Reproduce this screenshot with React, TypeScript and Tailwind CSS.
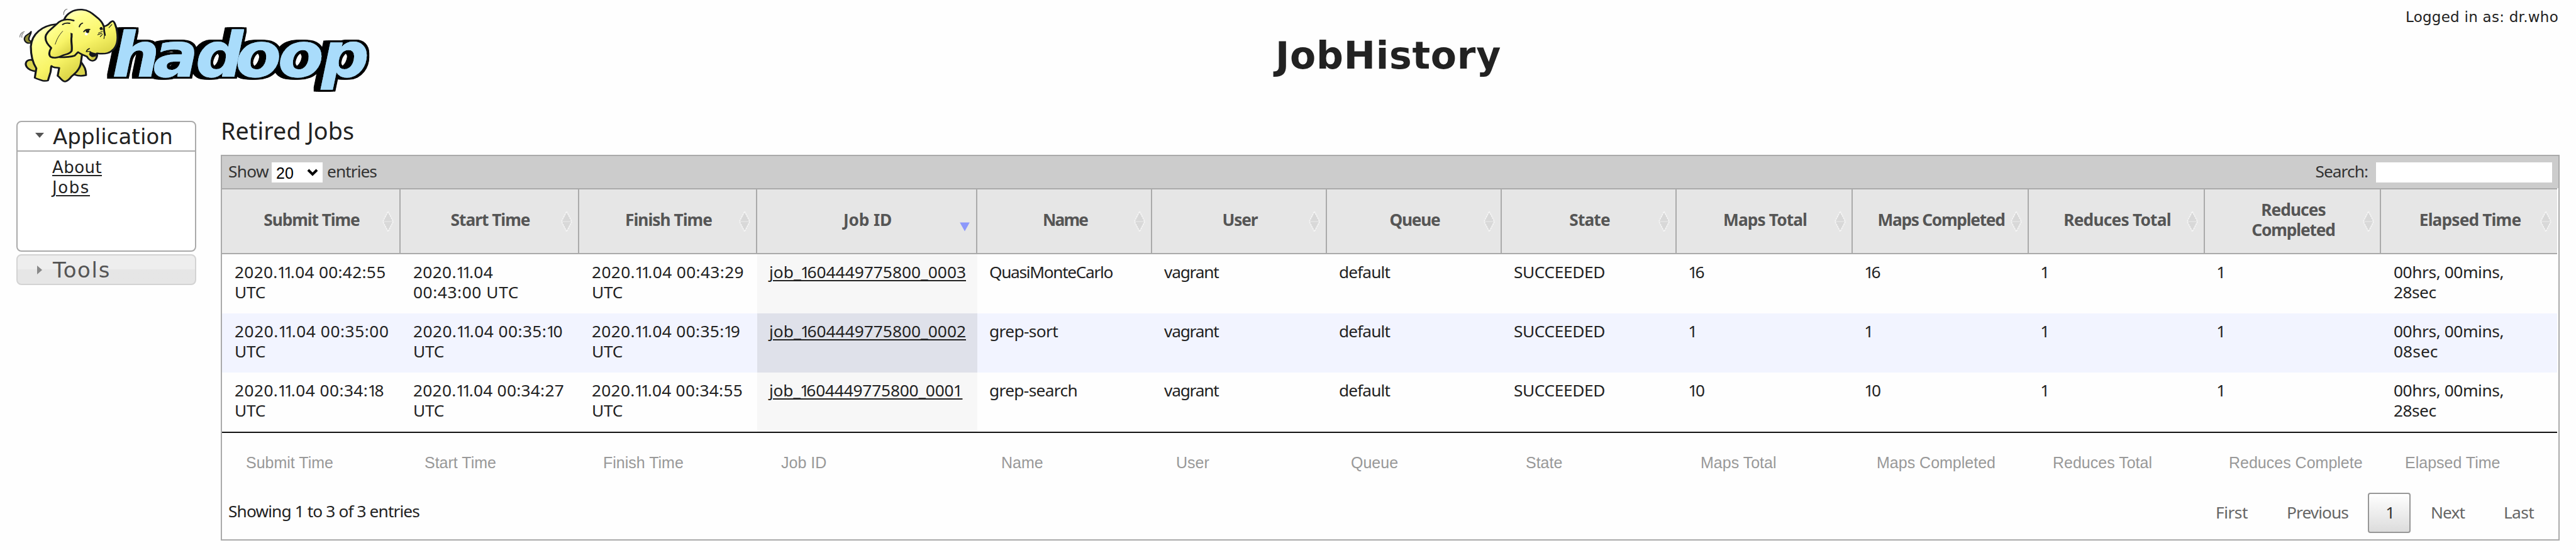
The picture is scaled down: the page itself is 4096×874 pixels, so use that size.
import { useLayoutEffect, useRef } from "react";

/** Text run whose tracking is adjusted so that it spans `w` pixels. */
function T({ children, w, className = "" }: { children: string; w?: number; className?: string }) {
  const ref = useRef<HTMLSpanElement>(null);
  useLayoutEffect(() => {
    const el = ref.current;
    if (!el || !w) return;
    el.style.letterSpacing = "0px";
    const natural = el.getBoundingClientRect().width;
    el.style.letterSpacing = `${(w - natural) / children.length}px`;
  }, [w, children]);
  return (
    <span ref={ref} className={`inline-block whitespace-pre ${className}`}>
      {children.split(/(1(?! ))/).map((part, i) =>
        part === "1" ? (
          <span key={i} className="-ml-[0.03em] -mr-[0.17em]">
            1
          </span>
        ) : (
          part
        ),
      )}
    </span>
  );
}

type Run = [string, number?];

const COLS =
  "grid grid-cols-[284px_284px_283px_350px_278px_278px_278px_278px_280px_280px_280px_280px_280px] w-[3713px]";

const HEADS: Run[][] = [
  [["Submit Time", 152.5]],
  [["Start Time", 126]],
  [["Finish Time", 138]],
  [["Job ID", 77]],
  [["Name", 71]],
  [["User", 56]],
  [["Queue", 80]],
  [["State", 64.5]],
  [["Maps Total", 133]],
  [["Maps Completed", 202]],
  [["Reduces Total", 170.5]],
  [["Reduces", 102.5], ["Completed", 132.5]],
  [["Elapsed Time", 161.5]],
];

const UTC: Run = ["UTC", 49];

const ROWS: Run[][][] = [
  [
    [["2020.11.04 00:42:55", 240.5], UTC],
    [["2020.11.04", 127], ["00:43:00 UTC", 168]],
    [["2020.11.04 00:43:29", 242], UTC],
    [["job_1604449775800_0003", 313]],
    [["QuasiMonteCarlo", 196]],
    [["vagrant", 86.5]],
    [["default", 81]],
    [["SUCCEEDED", 145]],
    [["16", 26]],
    [["16", 26]],
    [["1"]],
    [["1"]],
    [["00hrs, 00mins,", 175], ["28sec", 67.5]],
  ],
  [
    [["2020.11.04 00:35:00", 245.5], UTC],
    [["2020.11.04 00:35:10", 238], UTC],
    [["2020.11.04 00:35:19", 236], UTC],
    [["job_1604449775800_0002", 313]],
    [["grep-sort", 109]],
    [["vagrant", 86.5]],
    [["default", 81]],
    [["SUCCEEDED", 145]],
    [["1"]],
    [["1"]],
    [["1"]],
    [["1"]],
    [["00hrs, 00mins,", 175], ["08sec", 70.5]],
  ],
  [
    [["2020.11.04 00:34:18", 238], UTC],
    [["2020.11.04 00:34:27", 240], UTC],
    [["2020.11.04 00:34:55", 240], UTC],
    [["job_1604449775800_0001", 303]],
    [["grep-search", 140]],
    [["vagrant", 86.5]],
    [["default", 81]],
    [["SUCCEEDED", 145]],
    [["10", 27]],
    [["10", 27]],
    [["1"]],
    [["1"]],
    [["00hrs, 00mins,", 175], ["28sec", 67.5]],
  ],
];

const FOOT = [
  "Submit Time",
  "Start Time",
  "Finish Time",
  "Job ID",
  "Name",
  "User",
  "Queue",
  "State",
  "Maps Total",
  "Maps Completed",
  "Reduces Total",
  "Reduces Complete",
  "Elapsed Time",
];

function Logo() {
  return (
    <svg viewBox="0 0 1568 510" preserveAspectRatio="none" className="block h-[160px] w-[620px]">
      <defs>
        <linearGradient id="hide" x1="0" y1="0" x2="0.6" y2="1">
          <stop offset="0" stopColor="#fffff0" />
          <stop offset="0.3" stopColor="#ffff90" />
          <stop offset="0.7" stopColor="#f8f467" />
          <stop offset="1" stopColor="#dcd648" />
        </linearGradient>
        <filter id="edge" x="-10%" y="-10%" width="120%" height="120%">
          <feMorphology in="SourceAlpha" operator="dilate" radius="11 11" result="fat" />
          <feOffset in="fat" dx="-11" dy="0" result="s1" />
          <feOffset in="fat" dx="-22" dy="1" result="s2" />
          <feMerge>
            <feMergeNode in="s2" />
            <feMergeNode in="s1" />
            <feMergeNode in="fat" />
            <feMergeNode in="SourceGraphic" />
          </feMerge>
        </filter>
      </defs>
      <g transform="scale(0.85 1)" strokeLinejoin="round">
        <text
          x="531 725 926 1114 1315 1521"
          y="388"
          fontFamily="DejaVu Sans"
          fontWeight={700}
          fontStyle="italic"
          fontSize={314}
          fill="#a9dcfb"
          stroke="#a9dcfb"
          strokeWidth="3"
          filter="url(#edge)"
        >
          hadoop
        </text>
      </g>
      <g stroke="#15171c" strokeWidth="8" strokeLinejoin="round" strokeLinecap="round" fill="url(#hide)">
        <path d="M123 217C104 224 93 202 101 186C106 174 118 175 125 160C126 176 112 188 117 202C118 208 123 210 128 206Z" fill="#8f8c33" strokeWidth="6" />
        <path d="M123 303C104 306 99 322 108 340C116 354 130 360 146 362L150 310Z" fill="#d9d44c" />
        <path d="M324 310C334 330 347 345 346 381C330 385 312 384 300 378L290 330Z" fill="#d9d44c" />
        <path d="M225 123C170 130 128 170 124 235C124 275 130 315 146 346L140 394C150 402 165 404 172 409C180 410 188 411 193 407L203 366C206 350 204 340 207 334C215 346 228 341 238 344L232 384C242 392 250 412 262 413C272 411 279 401 287 388C302 372 322 350 325 320L330 275L300 150Z" />
        <path d="M258 99C268 68 296 46 330 49C364 52 378 78 396 94C408 108 414 120 417 133C438 134 442 106 454 107C462 110 463 126 468 142C475 180 477 220 458 248C444 268 426 276 390 270C392 284 388 305 372 308C357 306 354 294 349 286C338 280 324 274 314 264L300 282C280 290 250 290 240 290L200 200Z" />
        <path d="M296 104C268 94 244 100 228 122C204 150 184 166 183 188C182 214 196 230 206 243C196 262 196 280 204 288C216 296 236 292 250 282C262 274 280 276 288 258C292 236 284 210 288 186C290 170 286 158 284 152" />
      </g>
      <path d="M270 104C300 118 310 150 292 170L270 160Z" fill="#fbf97c" />
      <g stroke="#15171c" fill="none" strokeLinecap="round" strokeWidth="5">
        <path d="M252 158C236 180 228 200 222 224" strokeWidth="2.5" />
        <path d="M252 124Q262 114 280 118" strokeWidth="6" />
        <path d="M319 136Q321 122 332 117" />
        <path d="M337 161Q344 146 361 149" />
        <path d="M418 136Q418 158 422 178" strokeWidth="7" />
        <path d="M402 144L414 148M396 168L412 158M393 176L410 168M403 186L412 174M418 196L420 180M438 140L450 124" strokeWidth="3" />
        <path d="M347 262Q350 250 360 246M350 262Q356 258 362 262" strokeWidth="4" />
        <path d="M270 46Q256 48 256 74M262 52L256 62M80 188Q80 166 98 160M88 190Q86 174 94 168" strokeWidth="3" stroke="#777" />
      </g>
      <path d="M344 154L360 150L358 164L348 172Z" fill="#15171c" />
      <ellipse cx="347" cy="172" rx="6" ry="7" fill="#fff" />
      <ellipse cx="407" cy="144" rx="6" ry="8" fill="#15171c" />
      <path d="M362 258C368 266 380 268 388 270C389 282 384 288 376 290C368 292 362 284 358 276Z" fill="#15171c" />
      <path d="M364 294Q374 286 384 288Q382 300 373 302Q366 300 364 294Z" fill="#c9c341" />
    </svg>
  );
}

function SortBoth() {
  return (
    <svg viewBox="0 0 18 34" className="h-[34px] w-[18px]">
      <path d="M9 2L16.6 16.2H1.4ZM9 32L1.4 17.8H16.6Z" fill="#d8d8d8" />
      <path d="M9 1L17.2 17L9 33L0.8 17Z" fill="none" stroke="#f6f6f6" strokeWidth="1.6" strokeDasharray="2.6 1" />
    </svg>
  );
}

function SortDesc() {
  return (
    <svg viewBox="0 0 18 34" className="h-[34px] w-[18px]">
      <path d="M1.2 18.6H16.8L9 32.6Z" fill="#8c98fb" />
    </svg>
  );
}

export default function App() {
  return (
    <div className="flex h-[874px] w-[4096px] flex-col overflow-hidden bg-[#fefefe] font-['Noto_Sans',sans-serif] text-[26.3px] leading-[32px] text-[#222]">
      <header className="flex h-[188px] justify-between">
        <div className="w-[2028px]">
          <Logo />
        </div>
        <h1 className="flex-1 pt-[53px] font-['DejaVu_Sans',sans-serif] text-[60px] leading-[70px] font-bold">
          <T w={359}>JobHistory</T>
        </h1>
        <div className="flex justify-end pt-[11px] pr-[28px] font-['DejaVu_Sans',sans-serif] text-[23px]">
          <T w={243}>Logged in as: dr.who</T>
        </div>
      </header>

      <div className="flex items-start">
        <nav className="ml-[26px] w-[325px] pt-[4px] font-['DejaVu_Sans',sans-serif]">
          <div className="h-[208px] w-[286px] rounded-[8px] border-2 border-[#aaa] bg-white">
            <div className="flex h-[47px] items-center border-b-2 border-[#aaa] pl-[28px] text-[34px]">
              <svg viewBox="0 0 14 8" className="mt-[-4px] h-[8px] w-[14px]">
                <path d="M0 0H14L7 8Z" fill="#555" />
              </svg>
              <T w={191} className="ml-[14px]">Application</T>
            </div>
            <ul className="pt-[9px] pl-[55px] text-[26px]">
              <li>
                <T w={79} className="underline decoration-2 underline-offset-[3px]">About</T>
              </li>
              <li>
                <T w={60} className="underline decoration-2 underline-offset-[3px]">Jobs</T>
              </li>
            </ul>
          </div>
          <div className="mt-[4px] flex h-[49px] w-[286px] items-center rounded-[8px] border-2 border-[#d3d3d3] bg-linear-to-b from-[#eeeeee] from-50% to-[#e6e6e6] to-50% pl-[31px] text-[34px] text-[#555]">
            <svg viewBox="0 0 8 14" className="h-[14px] w-[8px]">
              <path d="M0 0V14L8 7Z" fill="#888" />
            </svg>
            <T w={92} className="ml-[17px]">Tools</T>
          </div>
        </nav>

        <main className="w-[3719px]">
          <h2 className="h-[58px] text-[37.7px] leading-[40px]">
            <T w={212}>Retired Jobs</T>
          </h2>
          <div className="h-[613px] border-2 border-[#aaa]">
            <div className="flex h-[51px] items-center justify-between bg-[#ccc] pr-[10px] pl-[10px] text-[#333]">
              <div className="flex items-center">
                <T w={64} className="mb-[3px]">Show</T>
                <div className="ml-[5px] flex h-[32px] w-[81px] items-center justify-between bg-white pr-[7px] pl-[7px] font-['Liberation_Sans',sans-serif] text-[25px] text-black">
                  <span className="pt-[2px]">20</span>
                  <svg viewBox="0 0 18 12" className="h-[12px] w-[18px]">
                    <path d="M2 2L9 9L16 2" fill="none" stroke="#000" strokeWidth="4" />
                  </svg>
                </div>
                <T w={79} className="mb-[3px] ml-[7px]">entries</T>
              </div>
              <div className="flex items-center">
                <T w={83.5} className="mb-[3px]">Search:</T>
                <div className="ml-[13px] h-[32px] w-[280px] bg-white" />
              </div>
            </div>

            <div className={`${COLS} h-[105px] border-y-2 border-[#aaa] font-bold text-[#555]`}>
              {HEADS.map((lines, i) => (
                <div
                  key={i}
                  className={`relative flex flex-col items-center justify-center bg-[#e6e6e6] pb-[6px] pl-[3px] ${i < 12 ? "border-r-2 border-[#aaa]" : ""}`}
                >
                  {lines.map(([t, w]) => (
                    <T key={t} w={w}>{t}</T>
                  ))}
                  <span className="absolute top-[34px] right-[9px]">{i === 3 ? <SortDesc /> : <SortBoth />}</span>
                </div>
              ))}
            </div>

            {ROWS.map((row, r) => (
              <div key={r} className={`${COLS} h-[94px] ${r === 1 ? "bg-[#f2f4ff]" : ""}`}>
                {row.map((lines, c) => (
                  <div
                    key={c}
                    className={`flex flex-col items-start pt-[12px] ${c < 3 || c === 12 ? "pl-[20px]" : "pl-[19px]"} ${c === 3 ? (r === 1 ? "bg-[#dfe1ea]" : "bg-[#f7f7f7]") : ""}`}
                  >
                    {lines.map(([t, w]) => (
                      <T
                        key={t}
                        w={w}
                        className={c === 3 ? "underline decoration-2 underline-offset-[3px]" : ""}
                      >
                        {t}
                      </T>
                    ))}
                  </div>
                ))}
              </div>
            ))}

            <div className={`${COLS} h-[64px] border-t-2 border-[#111] pt-[31px] font-['Liberation_Sans',sans-serif] text-[25px] text-[#999]`}>
              {FOOT.map((t) => (
                <div key={t} className="pl-[38px] whitespace-nowrap">{t}</div>
              ))}
            </div>

            <div className="flex justify-between pt-[33px] pr-[8px] pl-[10px]">
              <div className="pt-[13px]">
                <T w={304}>Showing 1 to 3 of 3 entries</T>
              </div>
              <div className="flex h-[64px] items-center text-[#666]">
                <T w={51} className="mx-[31px] mb-[2px]">First</T>
                <T w={98} className="mx-[31px] mb-[2px]">Previous</T>
                <div className="flex h-[64px] w-[68px] items-center justify-center rounded-[4px] border-2 border-[#979797] bg-linear-to-b from-white to-[#dcdcdc] pb-[2px] text-[#333]">
                  <T>1</T>
                </div>
                <T w={54} className="mr-[31px] mb-[2px] ml-[32px]">Next</T>
                <T w={48} className="mx-[31px] mb-[2px]">Last</T>
              </div>
            </div>
          </div>
        </main>
      </div>
    </div>
  );
}
